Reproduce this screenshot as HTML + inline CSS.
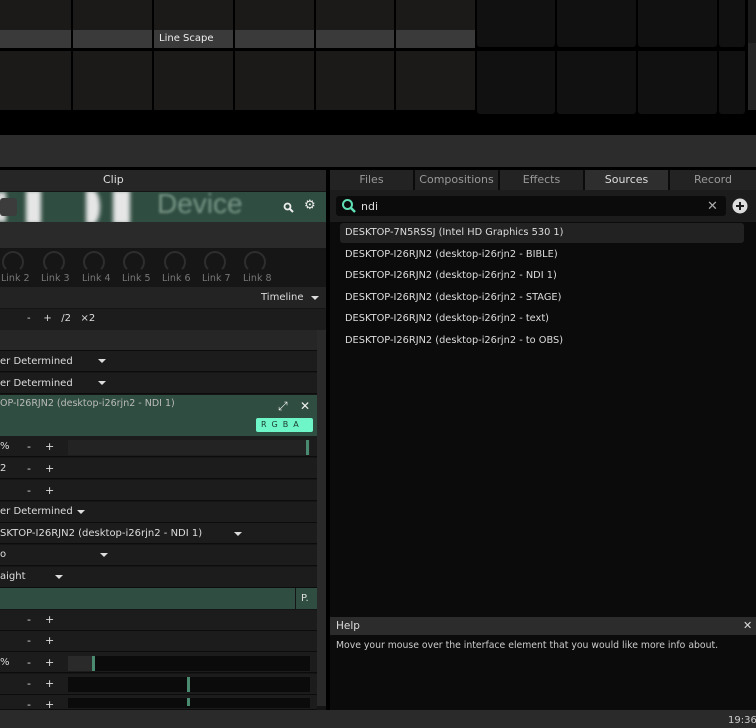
<!DOCTYPE html>
<html><head><meta charset="utf-8"><style>
*{margin:0;padding:0;box-sizing:border-box}
body{width:756px;height:728px;background:#000;position:relative;overflow:hidden;font-family:"DejaVu Sans","Liberation Sans",sans-serif;font-size:10px;color:#ddd}
.a{position:absolute}
.t{position:absolute;white-space:nowrap}
.cell{position:absolute;background:#1b1a19}
.dcell{position:absolute;background:#111;border-radius:0 0 3px 3px}
.lab{position:absolute;background:#3a3a3a;height:18px;top:30px}
.row{position:absolute;left:0;width:317px;height:21px;background:#1c1c1c;border-bottom:1px solid #0c0c0c}
.tri{position:absolute;width:0;height:0;border-left:4px solid transparent;border-right:4px solid transparent;border-top:4px solid #ddd}
.knob{position:absolute;top:251px;width:22px;height:22px;border:2px solid #2e2e2e;border-bottom-color:transparent;border-radius:50%}
.kl{position:absolute;top:273px;color:#777;font-size:9.5px}
.tab{position:absolute;top:170px;height:20px;background:#232323;color:#999;text-align:center;line-height:19px;font-size:11px}
.src{position:absolute;left:345px;font-size:9.8px;color:#ddd}
.pm{position:absolute;font-size:11px;color:#ddd}
</style></head><body>
<!-- top grid -->
<div class="cell" style="left:0;top:0;width:71px;height:47px"></div>
<div class="cell" style="left:73px;top:0;width:79px;height:47px"></div>
<div class="cell" style="left:154px;top:0;width:79px;height:47px"></div>
<div class="cell" style="left:235px;top:0;width:79px;height:47px"></div>
<div class="cell" style="left:316px;top:0;width:78px;height:47px"></div>
<div class="cell" style="left:396px;top:0;width:79px;height:47px"></div>
<div class="lab" style="left:0;width:71px"></div>
<div class="lab" style="left:73px;width:79px"></div>
<div class="lab" style="left:154px;width:79px"></div>
<div class="lab" style="left:235px;width:79px"></div>
<div class="lab" style="left:316px;width:78px"></div>
<div class="lab" style="left:396px;width:79px"></div>
<div class="t" style="left:159px;top:33px;font-size:10px;color:#eee">Line Scape</div>
<div class="cell" style="left:0;top:51px;width:71px;height:59px"></div>
<div class="cell" style="left:73px;top:51px;width:79px;height:59px"></div>
<div class="cell" style="left:154px;top:51px;width:79px;height:59px"></div>
<div class="cell" style="left:235px;top:51px;width:79px;height:59px"></div>
<div class="cell" style="left:316px;top:51px;width:78px;height:59px"></div>
<div class="cell" style="left:396px;top:51px;width:79px;height:59px"></div>
<div class="dcell" style="left:477px;top:0;width:78px;height:47px"></div>
<div class="dcell" style="left:557px;top:0;width:79px;height:47px"></div>
<div class="dcell" style="left:638px;top:0;width:79px;height:47px"></div>
<div class="dcell" style="left:719px;top:0;width:26px;height:47px"></div>
<div class="dcell" style="left:477px;top:51px;width:78px;height:63px"></div>
<div class="dcell" style="left:557px;top:51px;width:79px;height:63px"></div>
<div class="dcell" style="left:638px;top:51px;width:79px;height:63px"></div>
<div class="dcell" style="left:719px;top:51px;width:26px;height:63px"></div>
<div class="a" style="left:748px;top:0;width:8px;height:110px;background:#1a1a1a"></div>
<div class="a" style="left:748px;top:43px;width:8px;height:67px;background:#262626"></div>
<div class="a" style="left:0;top:135px;width:756px;height:32px;background:#2c2c2c"></div>

<!-- left panel -->
<div class="a" style="left:0;top:170px;width:326px;height:540px;background:#151515"></div>
<div class="a" style="left:0;top:170px;width:326px;height:21px;background:#262626"></div>
<div class="t" style="left:103px;top:173px;font-size:11px;color:#ddd">Clip</div>
<div class="a" style="left:0;top:192px;width:326px;height:30px;background:#2f4d41;overflow:hidden">
 <div class="a" style="left:-4px;top:0;width:10px;height:30px;background:#ddd;filter:blur(2px)"></div>
 <div class="a" style="left:0;top:6px;width:17px;height:18px;background:#3c3c3c;border-radius:3px"></div>
 <div class="a" style="left:26px;top:-2px;width:15px;height:34px;background:#e6e6e6;filter:blur(2px)"></div>
 <div class="a" style="left:86px;top:-2px;width:14px;height:34px;background:#e6e6e6;filter:blur(2px);border-radius:0 50% 50% 0"></div>
 <div class="a" style="left:113px;top:-2px;width:17px;height:34px;background:#e6e6e6;filter:blur(2px)"></div>
 <div class="t" style="left:157px;top:-4px;font-size:28px;font-family:'Liberation Sans',sans-serif;color:#7a9788;filter:blur(1.2px)">Device</div>
 <svg class="a" style="left:283px;top:10px" width="11" height="11" viewBox="0 0 11 11"><circle cx="4.5" cy="4.5" r="3" fill="none" stroke="#eee" stroke-width="1.8"/><path d="M7 7l3 3" stroke="#eee" stroke-width="2"/></svg>
 <div class="t" style="left:304px;top:6px;font-size:13px;color:#eee">&#9881;</div>
</div>
<div class="a" style="left:0;top:222px;width:326px;height:26px;background:#2a2a2a"></div>
<div class="a" style="left:0;top:249px;width:326px;height:38px;background:#161616"></div>
<div class="knob" style="left:2px"></div><div class="knob" style="left:43px"></div><div class="knob" style="left:83px"></div><div class="knob" style="left:123px"></div><div class="knob" style="left:164px"></div><div class="knob" style="left:204px"></div><div class="knob" style="left:244px"></div>
<div class="kl" style="left:1px">Link 2</div><div class="kl" style="left:41px">Link 3</div><div class="kl" style="left:82px">Link 4</div><div class="kl" style="left:122px">Link 5</div><div class="kl" style="left:162px">Link 6</div><div class="kl" style="left:202px">Link 7</div><div class="kl" style="left:243px">Link 8</div>
<div class="a" style="left:0;top:287px;width:326px;height:21px;background:#232323"></div>
<div class="t" style="left:261px;top:292px;font-size:10px">Timeline</div><div class="tri" style="left:311px;top:296px"></div>
<div class="a" style="left:0;top:309px;width:326px;height:21px;background:#1c1c1c"></div>
<div class="t" style="left:27px;top:313px;font-size:10px">-&nbsp;&nbsp;&nbsp;&nbsp;+&nbsp;&nbsp;&nbsp;/2&nbsp;&nbsp;&nbsp;×2</div>
<div class="a" style="left:317px;top:330px;width:9px;height:376px;background:#2a2a2a"></div>
<div class="row" style="top:330px;background:#262626"></div>
<div class="row" style="top:351px"></div><div class="t" style="left:0;top:356px">er Determined</div><div class="tri" style="left:98px;top:359px"></div>
<div class="row" style="top:373px"></div><div class="t" style="left:0;top:378px">er Determined</div><div class="tri" style="left:98px;top:381px"></div>
<div class="a" style="left:0;top:395px;width:317px;height:41px;background:#2f4d41"></div>
<div class="t" style="left:0;top:398px;color:#bbb;font-size:9.5px">OP-I26RJN2 (desktop-i26rjn2 - NDI 1)</div>
<div class="t" style="left:278px;top:399px;font-size:12px;color:#eee">&#10530;</div>
<div class="t" style="left:300px;top:399px;font-size:12px;color:#eee">&#10005;</div>
<div class="a" style="left:256px;top:418px;width:57px;height:14px;background:#6ef5c8;border-radius:2px;color:#1a3a2e;font-size:8px;line-height:14px;letter-spacing:5px;padding-left:5px">RGBA</div>
<div class="row" style="top:436px"></div><div class="t" style="left:0;top:441px">%</div><div class="pm" style="left:27px;top:440px">-&nbsp;&nbsp;&nbsp;&nbsp;+</div>
<div class="a" style="left:68px;top:440px;width:242px;height:15px;background:#232323"></div><div class="a" style="left:306px;top:440px;width:3px;height:15px;background:#4a8a70"></div>
<div class="row" style="top:458px"></div><div class="t" style="left:0;top:463px">2</div><div class="pm" style="left:27px;top:462px">-&nbsp;&nbsp;&nbsp;&nbsp;+</div>
<div class="row" style="top:480px"></div><div class="pm" style="left:27px;top:484px">-&nbsp;&nbsp;&nbsp;&nbsp;+</div>
<div class="row" style="top:502px"></div><div class="t" style="left:0;top:506px">er Determined</div><div class="tri" style="left:77px;top:510px"></div>
<div class="row" style="top:523px"></div><div class="t" style="left:0;top:528px">SKTOP-I26RJN2 (desktop-i26rjn2 - NDI 1)</div><div class="tri" style="left:234px;top:532px"></div>
<div class="row" style="top:545px"></div><div class="t" style="left:0;top:549px">o</div><div class="tri" style="left:100px;top:553px"></div>
<div class="row" style="top:567px"></div><div class="t" style="left:0;top:571px">aight</div><div class="tri" style="left:55px;top:575px"></div>
<div class="a" style="left:0;top:588px;width:295px;height:21px;background:#2f4d41"></div>
<div class="a" style="left:296px;top:588px;width:21px;height:21px;background:#2f4d41"></div>
<div class="t" style="left:301px;top:593px">P.</div>
<div class="row" style="top:610px"></div><div class="pm" style="left:27px;top:613px">-&nbsp;&nbsp;&nbsp;&nbsp;+</div>
<div class="row" style="top:631px"></div><div class="pm" style="left:27px;top:634px">-&nbsp;&nbsp;&nbsp;&nbsp;+</div>
<div class="row" style="top:652px"></div><div class="t" style="left:0;top:657px">%</div><div class="pm" style="left:27px;top:656px">-&nbsp;&nbsp;&nbsp;&nbsp;+</div>
<div class="a" style="left:68px;top:656px;width:242px;height:15px;background:#0b0b0b"></div><div class="a" style="left:68px;top:656px;width:24px;height:15px;background:#2a2a2a"></div><div class="a" style="left:92px;top:656px;width:3px;height:15px;background:#4a8a70"></div>
<div class="row" style="top:674px"></div><div class="pm" style="left:27px;top:677px">-&nbsp;&nbsp;&nbsp;&nbsp;+</div>
<div class="a" style="left:68px;top:677px;width:242px;height:15px;background:#0b0b0b"></div><div class="a" style="left:187px;top:677px;width:3px;height:15px;background:#4a8a70"></div>
<div class="row" style="top:695px;height:15px"></div><div class="pm" style="left:27px;top:698px">-&nbsp;&nbsp;&nbsp;&nbsp;+</div>
<div class="a" style="left:68px;top:698px;width:242px;height:10px;background:#0b0b0b"></div><div class="a" style="left:187px;top:698px;width:3px;height:8px;background:#4a8a70"></div>

<!-- right panel -->
<div class="a" style="left:330px;top:170px;width:426px;height:540px;background:#0b0b0b"></div>
<div class="a" style="left:330px;top:190px;width:426px;height:32px;background:#1c1c1c"></div>
<div class="tab" style="left:330px;width:83px">Files</div>
<div class="tab" style="left:415px;width:83px">Compositions</div>
<div class="tab" style="left:500px;width:83px">Effects</div>
<div class="tab" style="left:585px;width:83px;background:#2e2e2e;color:#ddd">Sources</div>
<div class="tab" style="left:670px;width:86px">Record</div>
<div class="a" style="left:336px;top:196px;width:390px;height:20px;background:#0b0b0b;border-radius:3px"></div>
<svg class="a" style="left:341px;top:198px" width="16" height="16" viewBox="0 0 16 16"><circle cx="6.5" cy="6.5" r="4.5" fill="none" stroke="#5fe0b5" stroke-width="2"/><path d="M10 10 L14 14" stroke="#5fe0b5" stroke-width="2.5"/></svg>
<div class="t" style="left:361px;top:200px;font-size:11px">ndi</div>
<div class="t" style="left:707px;top:199px;font-size:13px;color:#aaa">&#10005;</div>
<svg class="a" style="left:732px;top:198px" width="16" height="16" viewBox="0 0 16 16"><circle cx="8" cy="8" r="7.5" fill="#ddd"/><path d="M8 4v8M4 8h8" stroke="#1c1c1c" stroke-width="2"/></svg>
<div class="a" style="left:340px;top:223px;width:404px;height:20px;background:#222;border-radius:3px"></div>
<div class="src" style="top:227px">DESKTOP-7N5RSSJ (Intel HD Graphics 530 1)</div>
<div class="src" style="top:249px">DESKTOP-I26RJN2 (desktop-i26rjn2 - BIBLE)</div>
<div class="src" style="top:270px">DESKTOP-I26RJN2 (desktop-i26rjn2 - NDI 1)</div>
<div class="src" style="top:292px">DESKTOP-I26RJN2 (desktop-i26rjn2 - STAGE)</div>
<div class="src" style="top:313px">DESKTOP-I26RJN2 (desktop-i26rjn2 - text)</div>
<div class="src" style="top:335px">DESKTOP-I26RJN2 (desktop-i26rjn2 - to OBS)</div>
<div class="a" style="left:330px;top:617px;width:426px;height:18px;background:#2c2c2c"></div>
<div class="t" style="left:336px;top:620px;font-size:10.5px">Help</div>
<div class="t" style="left:743px;top:619px;font-size:11px">&#10005;</div>
<div class="t" style="left:336px;top:640px;font-size:9.3px;color:#ccc">Move your mouse over the interface element that you would like more info about.</div>
<div class="a" style="left:0;top:710px;width:756px;height:18px;background:#2a2a2a"></div>
<div class="t" style="left:728px;top:715px;font-size:10px;color:#ccc">19:36</div>
</body></html>
